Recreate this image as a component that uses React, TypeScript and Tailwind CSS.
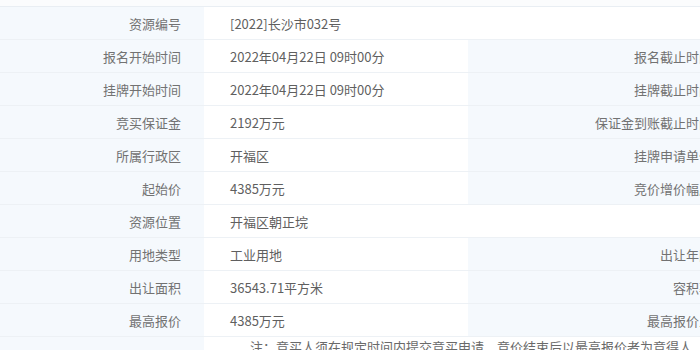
import React from "react";

type Row = { l: string; v: string; rl?: string; rv?: string };

const rows: Row[] = [
  { l: "资源编号", v: "[2022]长沙市032号" },
  { l: "报名开始时间", v: "2022年04月22日 09时00分", rl: "报名截止时间", rv: "2022年05月20日 17时00分" },
  { l: "挂牌开始时间", v: "2022年04月22日 09时00分", rl: "挂牌截止时间", rv: "2022年05月23日 10时00分" },
  { l: "竞买保证金", v: "2192万元", rl: "保证金到账截止时间", rv: "2022年05月20日 17时00分" },
  { l: "所属行政区", v: "开福区", rl: "挂牌申请单位", rv: "长沙市自然资源和规划局" },
  { l: "起始价", v: "4385万元", rl: "竞价增价幅度", rv: "50万元" },
  { l: "资源位置", v: "开福区朝正垸" },
  { l: "用地类型", v: "工业用地", rl: "出让年限", rv: "50年" },
  { l: "出让面积", v: "36543.71平方米", rl: "容积率", rv: "1.2" },
  { l: "最高报价", v: "4385万元", rl: "最高报价人", rv: "长沙某某有限公司" },
];

const font = { fontFamily: '"Noto Sans CJK SC", "Noto Sans", sans-serif' };

export default function App() {
  return (
    <div className="w-[700px] h-[350px] overflow-hidden bg-white" style={font}>
      <div className="h-[6px] bg-[#fbfcfd]" />
      <div className="w-[1000px] border-t border-[#e9eef3] text-[13px] leading-none">
        {rows.map((r, i) => (
          <div key={i} className="grid grid-cols-[204px_264px_265px_267px] h-[33px] border-b border-[#edf1f5]">
            <div className="bg-[#f5f9fd] flex items-center justify-end pr-[23px] text-[#727272]">{r.l}</div>
            {r.rl ? (
              <>
                <div className="flex items-center pl-[26px] text-[#5f5f5f]">{r.v}</div>
                <div className="bg-[#f5f9fd] flex items-center justify-end pr-[21px] text-[#727272]">{r.rl}</div>
                <div className="flex items-center pl-[26px] text-[#5f5f5f]">{r.rv}</div>
              </>
            ) : (
              <div className="col-span-3 flex items-center pl-[26px] text-[#5f5f5f]">{r.v}</div>
            )}
          </div>
        ))}
        <div className="grid grid-cols-[204px_796px] h-[40px]">
          <div className="bg-[#f5f9fd]" />
          <div className="pl-[46px] pt-[3px] text-[#6a6a6a] whitespace-nowrap">
            注：竞买人须在规定时间内提交竞买申请，竞价结束后以最高报价者为竞得人，具体详见挂牌出让文件
          </div>
        </div>
      </div>
    </div>
  );
}
